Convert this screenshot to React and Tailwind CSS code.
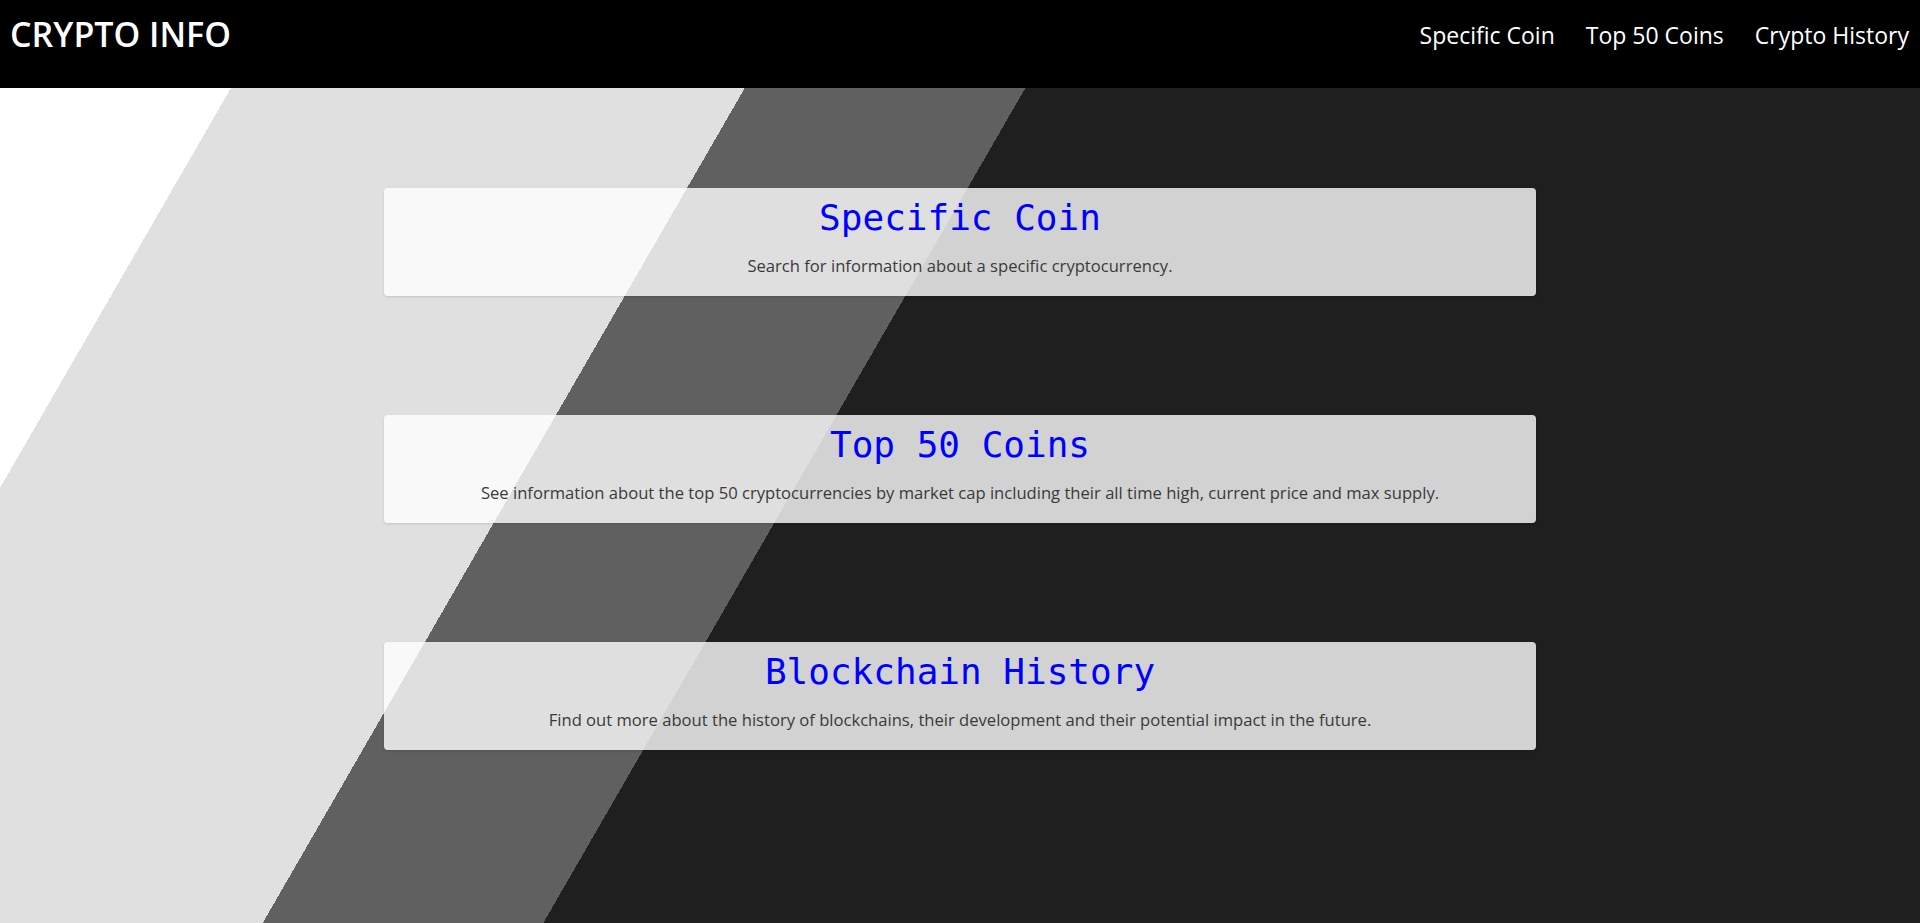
const cards = [
    {
        title: 'Specific Coin',
        text: 'Search for information about a specific cryptocurrency.',
    },
    {
        title: 'Top 50 Coins',
        text: 'See information about the top 50 cryptocurrencies by market cap including their all time high, current price and max supply.',
    },
    {
        title: 'Blockchain History',
        text: 'Find out more about the history of blockchains, their development and their potential impact in the future.',
    },
];

const navLinks = ['Specific Coin', 'Top 50 Coins', 'Crypto History'];

const App = () => {
    return (
        <div className="min-h-screen font-['Open_Sans',sans-serif]">
            <header className="h-[88px] bg-black flex items-start justify-between pl-[10px] pr-[11px]">
                <a href="#" className="mt-[13px] text-[34px] leading-[42px] font-semibold text-white">
                    CRYPTO INFO
                </a>
                <nav className="mt-[19px] flex gap-[31px]">
                    {navLinks.map((link) => (
                        <a key={link} href="#" className="text-[23px] leading-[32px] text-white">
                            {link}
                        </a>
                    ))}
                </nav>
            </header>

            <main className="min-h-[835px] pt-[100px] pb-[60px] flex flex-col items-center gap-[119px] bg-[linear-gradient(120deg,#ffffff_0_200px,#e0e0e0_200px_645px,#606060_645px_888px,#1f1f1f_888px)]">
                {cards.map((card) => (
                    <div
                        key={card.title}
                        className="w-[60%] bg-white/80 rounded shadow-sm text-center pt-[6px] pb-[18px]"
                    >
                        <h2 className="font-['DejaVu_Sans_Mono',monospace] text-[36px] leading-[48px] text-[#0000ff]">
                            {card.title}
                        </h2>
                        <p className="mt-[12px] text-[16.6px] leading-6 text-[#3a3a3a]">
                            {card.text}
                        </p>
                    </div>
                ))}
            </main>
        </div>
    );
};

export default App;
